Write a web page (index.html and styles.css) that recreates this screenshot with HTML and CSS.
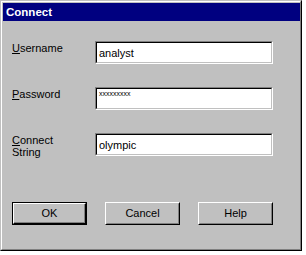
FILE: index.html
```html
<!DOCTYPE html>
<html>
<head>
<meta charset="utf-8">
<link rel="stylesheet" href="styles.css">
</head>
<body>
<div class="win">
  <div class="win-inner">
    <div class="titlebar">Connect</div>
    <div class="content">
      <div class="form">
        <div class="row">
          <div class="label"><u>U</u>sername</div>
          <div class="field"><span class="val">analyst</span></div>
        </div>
        <div class="row">
          <div class="label"><u>P</u>assword</div>
          <div class="field"><span class="pw">xxxxxxxxx</span></div>
        </div>
        <div class="row">
          <div class="label"><u>C</u>onnect<br>String</div>
          <div class="field"><span class="val">olympic</span></div>
        </div>
      </div>
      <div class="buttons">
        <div class="btn default"><div class="btn-face">OK</div></div>
        <div class="btn"><div class="btn-face">Cancel</div></div>
        <div class="btn"><div class="btn-face">Help</div></div>
      </div>
    </div>
  </div>
</div>
</body>
</html>
```

FILE: styles.css
```css
html, body {
  margin: 0;
  padding: 0;
  background: #ffffff;
}
body {
  font-family: "Liberation Sans", Arial, sans-serif;
  font-size: 11px;
  color: #000;
}
.win {
  width: 302px;
  height: 251px;
  box-sizing: border-box;
  border: 1px solid;
  border-color: #c0c0c0 #000000 #000000 #c0c0c0;
  background: #c0c0c0;
}
.win-inner {
  height: 100%;
  box-sizing: border-box;
  border: 1px solid;
  border-color: #ffffff #808080 #808080 #ffffff;
  padding: 1px 0 1px 1px;
  display: flex;
  flex-direction: column;
}
.titlebar {
  height: 18px;
  background: #000080;
  color: #ffffff;
  font-weight: bold;
  font-size: 11.5px;
  line-height: 18px;
  padding-left: 3px;
}
.content {
  padding: 20px 0 0 9px;
  display: flex;
  flex-direction: column;
}
.form {
  display: flex;
  flex-direction: column;
  gap: 23px;
}
.row {
  display: flex;
  height: 23px;
}
.label {
  width: 83px;
  line-height: 12px;
  padding-top: 1px;
}
.label u {
  text-underline-offset: 1px;
}
.field {
  width: 178px;
  height: 23px;
  box-sizing: border-box;
  border: 1px solid;
  border-color: #808080 #ffffff #ffffff #808080;
  background: #fff;
  position: relative;
}
.field::before {
  content: "";
  position: absolute;
  inset: 0;
  border: 1px solid;
  border-color: #000000 #c0c0c0 #c0c0c0 #000000;
}
.val {
  display: block;
  padding: 5px 0 0 3px;
  line-height: 13px;
}
.pw {
  display: block;
  padding: 2px 0 0 3px;
  font-size: 7px;
  line-height: 7px;
}
.buttons {
  display: flex;
  gap: 18px;
  margin-top: 46px;
}
.btn {
  width: 75px;
  height: 23px;
  box-sizing: border-box;
  border: 1px solid;
  border-color: #ffffff #000000 #000000 #ffffff;
}
.btn-face {
  height: 100%;
  box-sizing: border-box;
  border: 1px solid;
  border-color: #c0c0c0 #808080 #808080 #c0c0c0;
  text-align: center;
  line-height: 19px;
}
.btn.default {
  border: 1px solid #000000;
}
.btn.default .btn-face {
  border-color: #ffffff #000000 #000000 #ffffff;
  box-shadow: inset -1px -1px 0 #808080;
  line-height: 19px;
}
```
